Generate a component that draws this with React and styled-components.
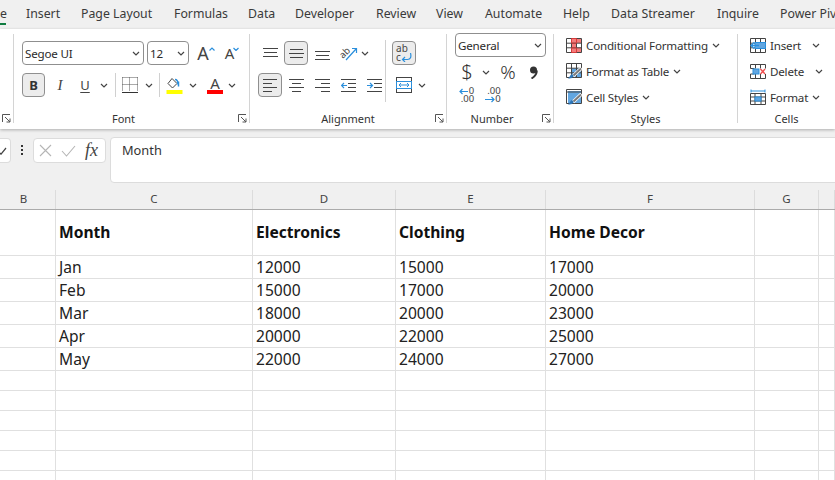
import React from "react";
import styled, { createGlobalStyle } from "styled-components";

const GlobalStyle = createGlobalStyle`
  html, body { margin: 0; padding: 0; background: #fff; overflow: hidden; }
  body { font-family: "Noto Sans", "Open Sans", sans-serif; color: #333; }
`;

const DARK = "#444";
const BLUE = "#2b8fdc";
const FILL = "#62a6e0";

const Page = styled.div`
  width: 835px;
  height: 480px;
  overflow: hidden;
  background: #fff;
`;

/* tabs */
const TabBar = styled.div`
  display: flex;
  height: 29px;
  background: #f0f0f0;
  white-space: nowrap;
  overflow: hidden;
`;
const Tab = styled.div`
  flex: none;
  width: ${(p) => p.$w}px;
  height: 29px;
  line-height: 28px;
  font-size: 12.3px;
  color: #3a3a3a;
`;
const ActiveTab = styled(Tab)`
  position: relative;
  &::after {
    content: "";
    position: absolute;
    left: 0;
    right: 20px;
    top: 23px;
    height: 2px;
    background: #107c41;
  }
`;

/* ribbon */
const Ribbon = styled.div`
  position: relative;
  display: flex;
  height: 94px;
  padding: 5px 0 1px;
  background: #fff;
  box-shadow: 0 1px 3px rgba(0, 0, 0, 0.28);
  overflow-x: hidden;
`;
const Group = styled.div`
  flex: none;
  box-sizing: border-box;
  width: ${(p) => p.$w}px;
  height: 89px;
  display: flex;
  flex-direction: column;
  border-right: ${(p) => (p.$last ? "none" : "1px solid #d4d4d4")};
`;
const GroupBody = styled.div`
  flex: 1;
  padding: ${(p) => p.$pt ?? 7}px 0 0 ${(p) => p.$pl ?? 8}px;
`;
const GroupFoot = styled.div`
  display: grid;
  grid-template-columns: 1fr auto 1fr;
  align-items: center;
  height: 14px;
  margin-bottom: -2px;
  font-size: 11px;
  color: #333;
`;
const FootLabel = styled.div`
  grid-column: 2;
  transform: translateX(${(p) => p.$dx ?? 0}px);
`;
const FootEnd = styled.div`
  grid-column: 3;
  justify-self: end;
  padding-right: 2px;
`;
const Row = styled.div`
  display: flex;
  align-items: center;
  height: ${(p) => p.$h ?? 24}px;
  margin-top: ${(p) => p.$mt ?? 0}px;
  margin-bottom: ${(p) => p.$mb ?? 8}px;
`;
const Slot = styled.div`
  flex: none;
  display: flex;
  align-items: center;
  justify-content: center;
  box-sizing: border-box;
  width: ${(p) => p.$w}px;
  height: 24px;
  margin-left: ${(p) => p.$ml ?? 0}px;
  border-radius: 4px;
  border: ${(p) => (p.$on ? "1px solid #8f8f8f" : "none")};
  background: ${(p) => (p.$on ? "#ececec" : "transparent")};
`;
const Combo = styled.div`
  flex: none;
  box-sizing: border-box;
  display: flex;
  align-items: center;
  justify-content: space-between;
  width: ${(p) => p.$w}px;
  height: 24px;
  margin-left: ${(p) => p.$ml ?? 0}px;
  margin-top: ${(p) => p.$mt ?? 0}px;
  padding: 0 3px 0 2px;
  border: 1px solid #8f8f8f;
  border-radius: 4px;
  font-size: 11.6px;
  letter-spacing: -0.2px;
  color: #2a2a2a;
  background: #fff;
`;
const Divider = styled.div`
  flex: none;
  width: 1px;
  height: ${(p) => p.$h ?? 24}px;
  margin-left: ${(p) => p.$ml ?? 0}px;
  margin-top: ${(p) => p.$mt ?? 0}px;
  background: #d0d0d0;
`;
const SplitCol = styled.div`
  display: flex;
`;
const BoldMark = styled.span`
  font-weight: 700;
  font-size: 13px;
  color: #333;
`;
const ItalicMark = styled.span`
  font-family: "Liberation Serif", serif;
  font-style: italic;
  font-size: 15px;
  color: #444;
`;
const UnderMark = styled.span`
  font-size: 13px;
  color: #444;
  text-decoration: underline;
  text-underline-offset: 2px;
`;
const Symbol = styled.span`
  font-size: ${(p) => p.$size}px;
  font-weight: 300;
  color: #333;
  line-height: 1;
`;
const GrowMark = styled.div`
  display: flex;
  align-items: flex-start;
  font-size: ${(p) => p.$size}px;
  line-height: 18px;
  color: ${DARK};
`;
const CaretBox = styled.div`
  margin: 3px 0 0 ${(p) => p.$ml}px;
`;
const ColorMark = styled.div`
  display: flex;
  flex-direction: column;
  align-items: center;
  width: 16px;
  height: 17px;
  font-size: 15px;
  line-height: 13px;
  color: ${DARK};
`;
const ColorBar = styled.div`
  width: 16px;
  height: 4px;
  background: #ff0000;
`;
const TinyStack = styled.div`
  display: flex;
  flex-direction: column;
  font-size: ${(p) => p.$size}px;
  line-height: ${(p) => p.$lh}px;
  color: ${DARK};
`;
const TinyLine = styled.div`
  display: flex;
  align-items: center;
  justify-content: ${(p) => p.$end ? "flex-end" : "flex-start"};
  gap: ${(p) => p.$gap ?? 1}px;
  height: ${(p) => p.$lh}px;
`;
const StackRow = styled.div`
  display: flex;
  align-items: center;
  height: 26px;
  font-size: 11.6px;
  letter-spacing: -0.2px;
  color: #333;
  white-space: nowrap;
`;
const StackLabel = styled.span`
  margin: 0 ${(p) => p.$mr ?? 4}px 0 4px;
`;
const StackList = styled.div`
  margin-top: -2px;
`;

/* formula bar */
const FormulaBar = styled.div`
  display: flex;
  align-items: flex-start;
  height: 61px;
  padding-top: 8px;
  box-sizing: border-box;
  background: #f0f0f0;
  overflow: hidden;
`;
const NameEnd = styled.div`
  flex: none;
  display: flex;
  align-items: center;
  box-sizing: border-box;
  width: 11px;
  height: 25px;
  margin-top: 1px;
  background: #fff;
  border: 1px solid #dcdcdc;
  border-left: none;
  border-radius: 0 4px 4px 0;
`;
const Dots = styled.div`
  flex: none;
  display: flex;
  flex-direction: column;
  gap: 2px;
  margin: 8px 10px 0 10px;
`;
const Dot = styled.i`
  display: block;
  width: 2px;
  height: 2px;
  background: #333;
`;
const FxBox = styled.div`
  flex: none;
  box-sizing: border-box;
  display: flex;
  align-items: center;
  width: 73px;
  height: 25px;
  margin-top: 1px;
  padding-left: 5px;
  background: #fff;
  border: 1px solid #dcdcdc;
  border-radius: 4px;
`;
const FxMark = styled.span`
  margin-left: 9px;
  font-family: "Liberation Serif", serif;
  font-style: italic;
  font-size: 18px;
  color: #444;
`;
const FormulaInput = styled.div`
  flex: none;
  box-sizing: border-box;
  width: 760px;
  height: 46px;
  margin-left: 4px;
  padding: 3px 0 0 11px;
  background: #fff;
  border: 1px solid #dcdcdc;
  border-radius: 4px;
  font-size: 12.8px;
  color: #333;
`;

/* sheet */
const COLUMNS = "56px 197px 143px 150px 209px 64px 16px";
const HeaderRow = styled.div`
  display: grid;
  grid-template-columns: ${COLUMNS};
  height: 20px;
  box-sizing: border-box;
  background: #f0f0f0;
  border-bottom: 1px solid #ababab;
`;
const HeaderCell = styled.div`
  box-sizing: border-box;
  height: 19px;
  line-height: 18px;
  padding-right: ${(p) => p.$pr ?? 0}px;
  text-align: center;
  font-size: 11.5px;
  color: #444;
  border-right: 1px solid #dcdcdc;
`;
const SheetRow = styled.div`
  display: grid;
  grid-template-columns: ${COLUMNS};
  height: ${(p) => p.$h}px;
`;
const Cell = styled.div`
  box-sizing: border-box;
  padding-left: 3px;
  border-right: 1px solid #e0e0e0;
  border-bottom: 1px solid #e0e0e0;
  font-size: 15.6px;
  font-weight: ${(p) => (p.$bold ? 700 : 400)};
  line-height: ${(p) => p.$h - 1}px;
  color: ${(p) => (p.$bold ? "#111" : "#222")};
  white-space: nowrap;
`;

/* drawings */
const Ico = ({ w = 16, h = 16, children }) => (
  <svg width={w} height={h} viewBox={`0 0 ${w} ${h}`} fill="none" style={{ display: "block", flex: "none" }}>
    {children}
  </svg>
);
const Chevron = () => (
  <Ico w={8} h={5}>
    <path d="M1 1l3 3 3-3" stroke={DARK} strokeWidth="1.2" />
  </Ico>
);
const Launcher = () => (
  <Ico w={9} h={9}>
    <path d="M.5 8V.5H8M3 3l5 5M8 4.500V8H4.500" stroke="#555" strokeWidth="1" />
  </Ico>
);
const GrowFont = ({ up }) => (
  <GrowMark $size={up ? 18 : 15}>
    A
    <CaretBox $ml={up ? 0 : -1}>
      <Ico w={6} h={4}>
        <path d={up ? "M.5 3.500l2.500-2.500 2.500 2.500" : "M.5 1l2.500 2.500 2.500-2.500"} stroke={BLUE} strokeWidth="1.200" />
      </Ico>
    </CaretBox>
  </GrowMark>
);
const Borders = () => (
  <Ico w={16} h={16}>
    <path d="M.5 .5h15M.5 .5v14M15.500 .5v14M7.500 .5v14M.5 7.500h15" stroke="#555" strokeDasharray="1 1" />
    <path d="M0 15.500h16" stroke="#333" />
  </Ico>
);
const FillColor = () => (
  <Ico w={17} h={17}>
    <path d="M6 1.500l5 5-4.500 4.500-4.500-4.500z" stroke={DARK} fill="#fff" />
    <path d="M12 7.500c0-3-1-5-3-5" stroke={BLUE} strokeWidth="1.500" />
    <path d="M12.500 4.500v5" stroke={BLUE} strokeWidth="1.500" />
    <rect x="0.500" y="13" width="16" height="4" fill="#ffff00" />
  </Ico>
);
const FontColor = () => (
  <ColorMark>
    A
    <ColorBar />
  </ColorMark>
);
const Lines = ({ rows }) => (
  <Ico w={15} h={15}>
    {rows.map(([x1, x2, y], i) => (
      <path key={i} d={`M${x1} ${y + 0.5}H${x2}`} stroke={DARK} />
    ))}
  </Ico>
);
const Indent = ({ more }) => (
  <Ico w={15} h={15}>
    <path d="M0 1.500h15M7 5.500h8M7 9.500h8M0 13.500h15" stroke={DARK} />
    <path d={more ? "M0 7.500h5M3 5l2.500 2.500L3 10" : "M.5 7.500h5.500M3 5L.5 7.500 3 10"} stroke={BLUE} strokeWidth="1.200" />
  </Ico>
);
const Orientation = () => (
  <Ico w={18} h={16}>
    <text x="0" y="11" transform="rotate(-45 5 9)" fontFamily="Noto Sans" fontSize="9.500" fill={DARK}>ab</text>
    <path d="M6 15L16 4M12 3.500h4.500V8" stroke={BLUE} strokeWidth="1.200" />
  </Ico>
);
const WrapText = () => (
  <TinyStack $size={10} $lh={9}>
    <TinyLine $lh={9}>ab</TinyLine>
    <TinyLine $lh={9} $gap={0}>
      c
      <Ico w={11} h={9}>
        <path d="M9.500 0c1 4 0 6.500-3 6.500H2M4 4L1.500 6.500 4 9" stroke={BLUE} strokeWidth="1.200" />
      </Ico>
    </TinyLine>
  </TinyStack>
);
const Merge = () => (
  <Ico w={16} h={16}>
    <rect x=".5" y=".5" width="15" height="15" stroke={DARK} />
    <rect x=".5" y="4.500" width="15" height="7" fill="#fff" stroke={BLUE} />
    <path d="M3 8h10M5 6L3 8l2 2M11 6l2 2-2 2" stroke={BLUE} />
  </Ico>
);
const Decimal = ({ more }) =>
  more ? (
    <TinyStack $size={9.500} $lh={8}>
      <TinyLine $lh={8} $gap={1}>
        <Ico w={9} h={7}>
          <path d="M1 3.500h8M3.500 1L1 3.500 3.500 6" stroke={BLUE} strokeWidth="1.200" />
        </Ico>
        0
      </TinyLine>
      <TinyLine $lh={8} $end>.00</TinyLine>
    </TinyStack>
  ) : (
    <TinyStack $size={9.500} $lh={8}>
      <TinyLine $lh={8} $end>.00</TinyLine>
      <TinyLine $lh={8} $gap={0}>
        <Ico w={10} h={7}>
          <path d="M0 3.500h9M6.500 1L9 3.500 6.500 6" stroke={BLUE} strokeWidth="1.200" />
        </Ico>
        0
      </TinyLine>
    </TinyStack>
  );
const Comma = () => (
  <Ico w={9} h={13}>
    <circle cx="4.500" cy="4" r="3.500" fill="#333" />
    <path d="M7.800 4.500C7.800 8 6 10.500 2.500 12.500" stroke="#333" strokeWidth="2" />
  </Ico>
);
const Cross = () => (
  <Ico w={13} h={13}>
    <path d="M1 1l11 11M12 1L1 12" stroke="#b5b5b5" strokeWidth="1.100" />
  </Ico>
);
const Tick = () => (
  <Ico w={15} h={12}>
    <path d="M1 6l4.500 5L14 1" stroke="#b5b5b5" strokeWidth="1.100" />
  </Ico>
);
const TickEnd = () => (
  <Ico w={7} h={8}>
    <path d="M0 6l1 1.200L6 1" stroke="#444" strokeWidth="1.200" />
  </Ico>
);
const GridLines = () => (
  <path d="M.5 .5h15v14H.5zM5.500 .5v14M10.500 .5v14M.5 5.200h15M.5 9.800h15" stroke={DARK} fill="none" />
);
const CondFormat = () => (
  <Ico h={15}>
    <path d="M6 1h9v4H11v4.500h4v4.500H6z" fill="#f47c7c" />
    <GridLines />
    <path d="M5.500 .5h5v4.700H5.500zM5.500 9.800h5v4.700h-5z" stroke="#d83b3b" />
  </Ico>
);
const Brush = () => (
  <>
    <path d="M15.500 5L7 13" stroke="#fff" strokeWidth="3.500" />
    <path d="M15 5.500L7.500 12.500" stroke="#7a7a7a" strokeWidth="2" />
    <path d="M2 15.500c2 0 5 0 5.500-3L6 11c-2 .5-2 3-4 4.500z" fill="#2e75b6" />
  </>
);
const TableStyle = () => (
  <Ico h={16}>
    <rect x="5.500" y="5.200" width="10" height="9.300" fill={FILL} />
    <GridLines />
    <Brush />
  </Ico>
);
const CellStyle = () => (
  <Ico h={16}>
    <rect x="2" y="2" width="13" height="12" fill={FILL} />
    <path d="M.5 .5h15v14H.5z" stroke={DARK} />
    <path d="M.5 3h15" stroke={DARK} />
    <Brush />
  </Ico>
);
const InsertCells = () => (
  <Ico h={15}>
    <GridLines />
    <rect x="5" y="4.500" width="10.500" height="6" fill={FILL} stroke={BLUE} />
    <path d="M1 7.500h8M4 4.500l-3 3 3 3" stroke={BLUE} strokeWidth="1.300" fill="#fff" />
  </Ico>
);
const DeleteCells = () => (
  <Ico h={15}>
    <path d="M.5 .5h15M.5 14.500h15M5.500 .5v4M5.500 10v4.500M10.500 .5v4M10.500 10v4.500M.5 .5v4M15.500 .5v4M.5 10v4.500M15.500 10v4.500M.5 4.500h4M.5 10h4" stroke={DARK} />
    <rect x="3" y="5" width="6" height="5" fill={FILL} stroke={BLUE} />
    <path d="M10.500 5l4.500 5M15 5l-4.500 5" stroke="#f05050" strokeWidth="1.400" />
  </Ico>
);
const FormatCells = () => (
  <Ico h={16}>
    <path d="M1 .5v3M15 .5v3M1 2h14" stroke={BLUE} />
    <path d="M.5 4.500h15v11H.5zM5 4.500v11M11 4.500v11M.5 8h15M.5 12h15" stroke={DARK} />
    <rect x="5" y="8" width="6" height="4" fill={FILL} stroke={BLUE} />
  </Ico>
);

const TABS = [
  ["Insert", 55],
  ["Page Layout", 93],
  ["Formulas", 74],
  ["Data", 47],
  ["Developer", 81],
  ["Review", 60],
  ["View", 49],
  ["Automate", 78],
  ["Help", 48],
  ["Data Streamer", 106],
  ["Inquire", 63],
  ["Power Pivot", 80],
];

const COLS = [
  { label: "B", pr: 8 },
  { label: "C" },
  { label: "D" },
  { label: "E" },
  { label: "F" },
  { label: "G" },
  { label: "" },
];

const ROWS = [
  { h: 46, bold: true, cells: ["Month", "Electronics", "Clothing", "Home Decor"] },
  { h: 23, cells: ["Jan", "12000", "15000", "17000"] },
  { h: 23, cells: ["Feb", "15000", "17000", "20000"] },
  { h: 23, cells: ["Mar", "18000", "20000", "23000"] },
  { h: 23, cells: ["Apr", "20000", "22000", "25000"] },
  { h: 23, cells: ["May", "22000", "24000", "27000"] },
  { h: 20, cells: [] },
  { h: 20, cells: [] },
  { h: 20, cells: [] },
  { h: 20, cells: [] },
  { h: 20, cells: [] },
  { h: 20, cells: [] },
];

function FontGroup() {
  return (
    <Group $w={236}>
      <GroupBody>
        <Row>
          <Combo $w={122}>
            Segoe UI <Chevron />
          </Combo>
          <Combo $w={42} $ml={3}>
            12 <Chevron />
          </Combo>
          <Slot $w={18} $ml={8}><GrowFont up /></Slot>
          <Slot $w={16} $ml={9}><GrowFont /></Slot>
        </Row>
        <Row>
          <Slot $w={23} $on><BoldMark>B</BoldMark></Slot>
          <Slot $w={30}><ItalicMark>I</ItalicMark></Slot>
          <Slot $w={20}><UnderMark>U</UnderMark></Slot>
          <Slot $w={18}><Chevron /></Slot>
          <Divider $ml={2} />
          <Slot $w={16} $ml={6}><Borders /></Slot>
          <Slot $w={21}><Chevron /></Slot>
          <Divider />
          <Slot $w={17} $ml={6}><FillColor /></Slot>
          <Slot $w={20}><Chevron /></Slot>
          <Slot $w={16} $ml={4}><FontColor /></Slot>
          <Slot $w={18}><Chevron /></Slot>
        </Row>
      </GroupBody>
      <GroupFoot>
        <FootLabel $dx={-8}>Font</FootLabel>
        <FootEnd><Launcher /></FootEnd>
      </GroupFoot>
    </Group>
  );
}

function AlignmentGroup() {
  return (
    <Group $w={197}>
      <GroupBody $pl={8}>
        <SplitCol>
          <div>
            <Row>
              <Slot $w={15} $ml={5}><Lines rows={[[0, 15, 2], [1, 14, 6], [0, 15, 10]]} /></Slot>
              <Slot $w={24} $ml={6} $on><Lines rows={[[1, 14, 3], [0, 15, 7], [1, 14, 11]]} /></Slot>
              <Slot $w={15} $ml={7}><Lines rows={[[0, 15, 5], [1, 14, 9], [0, 15, 13]]} /></Slot>
              <Slot $w={18} $ml={10}><Orientation /></Slot>
              <Slot $w={14}><Chevron /></Slot>
            </Row>
            <Row>
              <Slot $w={24} $on><Lines rows={[[0, 14, 1], [0, 9, 5], [0, 14, 9], [0, 9, 13]]} /></Slot>
              <Slot $w={15} $ml={7}><Lines rows={[[0, 15, 1], [3, 12, 5], [0, 15, 9], [3, 12, 13]]} /></Slot>
              <Slot $w={15} $ml={11}><Lines rows={[[0, 15, 1], [6, 15, 5], [0, 15, 9], [6, 15, 13]]} /></Slot>
              <Slot $w={15} $ml={11}><Indent /></Slot>
              <Slot $w={15} $ml={11}><Indent more /></Slot>
            </Row>
          </div>
          <Divider $h={62} $ml={3} $mt={-1} />
          <div>
            <Row>
              <Slot $w={24} $ml={6} $on><WrapText /></Slot>
            </Row>
            <Row>
              <Slot $w={16} $ml={10}><Merge /></Slot>
              <Slot $w={20}><Chevron /></Slot>
            </Row>
          </div>
        </SplitCol>
      </GroupBody>
      <GroupFoot>
        <FootLabel>Alignment</FootLabel>
        <FootEnd><Launcher /></FootEnd>
      </GroupFoot>
    </Group>
  );
}

function NumberGroup() {
  return (
    <Group $w={107}>
      <GroupBody $pt={0} $pl={8}>
        <Combo $w={91} $mt={-1}>
          General <Chevron />
        </Combo>
        <Row $h={26} $mb={0} $mt={2}>
          <Slot $w={24}><Symbol $size={20}>$</Symbol></Slot>
          <Slot $w={13}><Chevron /></Slot>
          <Slot $w={28} $ml={2}><Symbol $size={19}>%</Symbol></Slot>
          <Slot $w={24} $ml={-1}><Comma /></Slot>
        </Row>
        <Row $h={20} $mb={0}>
          <Slot $w={17} $ml={3}><Decimal more /></Slot>
          <Slot $w={16} $ml={10}><Decimal /></Slot>
        </Row>
      </GroupBody>
      <GroupFoot>
        <FootLabel $dx={-8}>Number</FootLabel>
        <FootEnd><Launcher /></FootEnd>
      </GroupFoot>
    </Group>
  );
}

function StylesGroup() {
  return (
    <Group $w={184}>
      <GroupBody $pt={0} $pl={12}>
        <StackList>
          <StackRow><CondFormat /><StackLabel>Conditional Formatting</StackLabel><Chevron /></StackRow>
          <StackRow><TableStyle /><StackLabel>Format as Table</StackLabel><Chevron /></StackRow>
          <StackRow><CellStyle /><StackLabel>Cell Styles</StackLabel><Chevron /></StackRow>
        </StackList>
      </GroupBody>
      <GroupFoot>
        <FootLabel>Styles</FootLabel>
      </GroupFoot>
    </Group>
  );
}

function CellsGroup() {
  return (
    <Group $w={97} $last>
      <GroupBody $pt={0} $pl={12}>
        <StackList>
          <StackRow><InsertCells /><StackLabel $mr={11}>Insert</StackLabel><Chevron /></StackRow>
          <StackRow><DeleteCells /><StackLabel $mr={11}>Delete</StackLabel><Chevron /></StackRow>
          <StackRow><FormatCells /><StackLabel>Format</StackLabel><Chevron /></StackRow>
        </StackList>
      </GroupBody>
      <GroupFoot>
        <FootLabel>Cells</FootLabel>
      </GroupFoot>
    </Group>
  );
}

export default function App() {
  return (
    <Page>
      <GlobalStyle />
      <TabBar>
        <ActiveTab $w={26}>e</ActiveTab>
        {TABS.map(([name, w]) => (
          <Tab key={name} $w={w}>{name}</Tab>
        ))}
      </TabBar>
      <Ribbon>
        <Group $w={14}>
          <GroupBody />
          <GroupFoot>
            <FootEnd><Launcher /></FootEnd>
          </GroupFoot>
        </Group>
        <FontGroup />
        <AlignmentGroup />
        <NumberGroup />
        <StylesGroup />
        <CellsGroup />
      </Ribbon>
      <FormulaBar>
        <NameEnd><TickEnd /></NameEnd>
        <Dots><Dot /><Dot /><Dot /></Dots>
        <FxBox>
          <Cross />
          <Slot $w={15} $ml={9}><Tick /></Slot>
          <FxMark>fx</FxMark>
        </FxBox>
        <FormulaInput>Month</FormulaInput>
      </FormulaBar>
      <HeaderRow>
        {COLS.map((c, i) => (
          <HeaderCell key={i} $pr={c.pr}>{c.label}</HeaderCell>
        ))}
      </HeaderRow>
      {ROWS.map((r, i) => (
        <SheetRow key={i} $h={r.h}>
          {[0, 1, 2, 3, 4, 5, 6].map((c) => (
            <Cell key={c} $h={r.h} $bold={r.bold}>{c > 0 ? r.cells[c - 1] : ""}</Cell>
          ))}
        </SheetRow>
      ))}
    </Page>
  );
}
